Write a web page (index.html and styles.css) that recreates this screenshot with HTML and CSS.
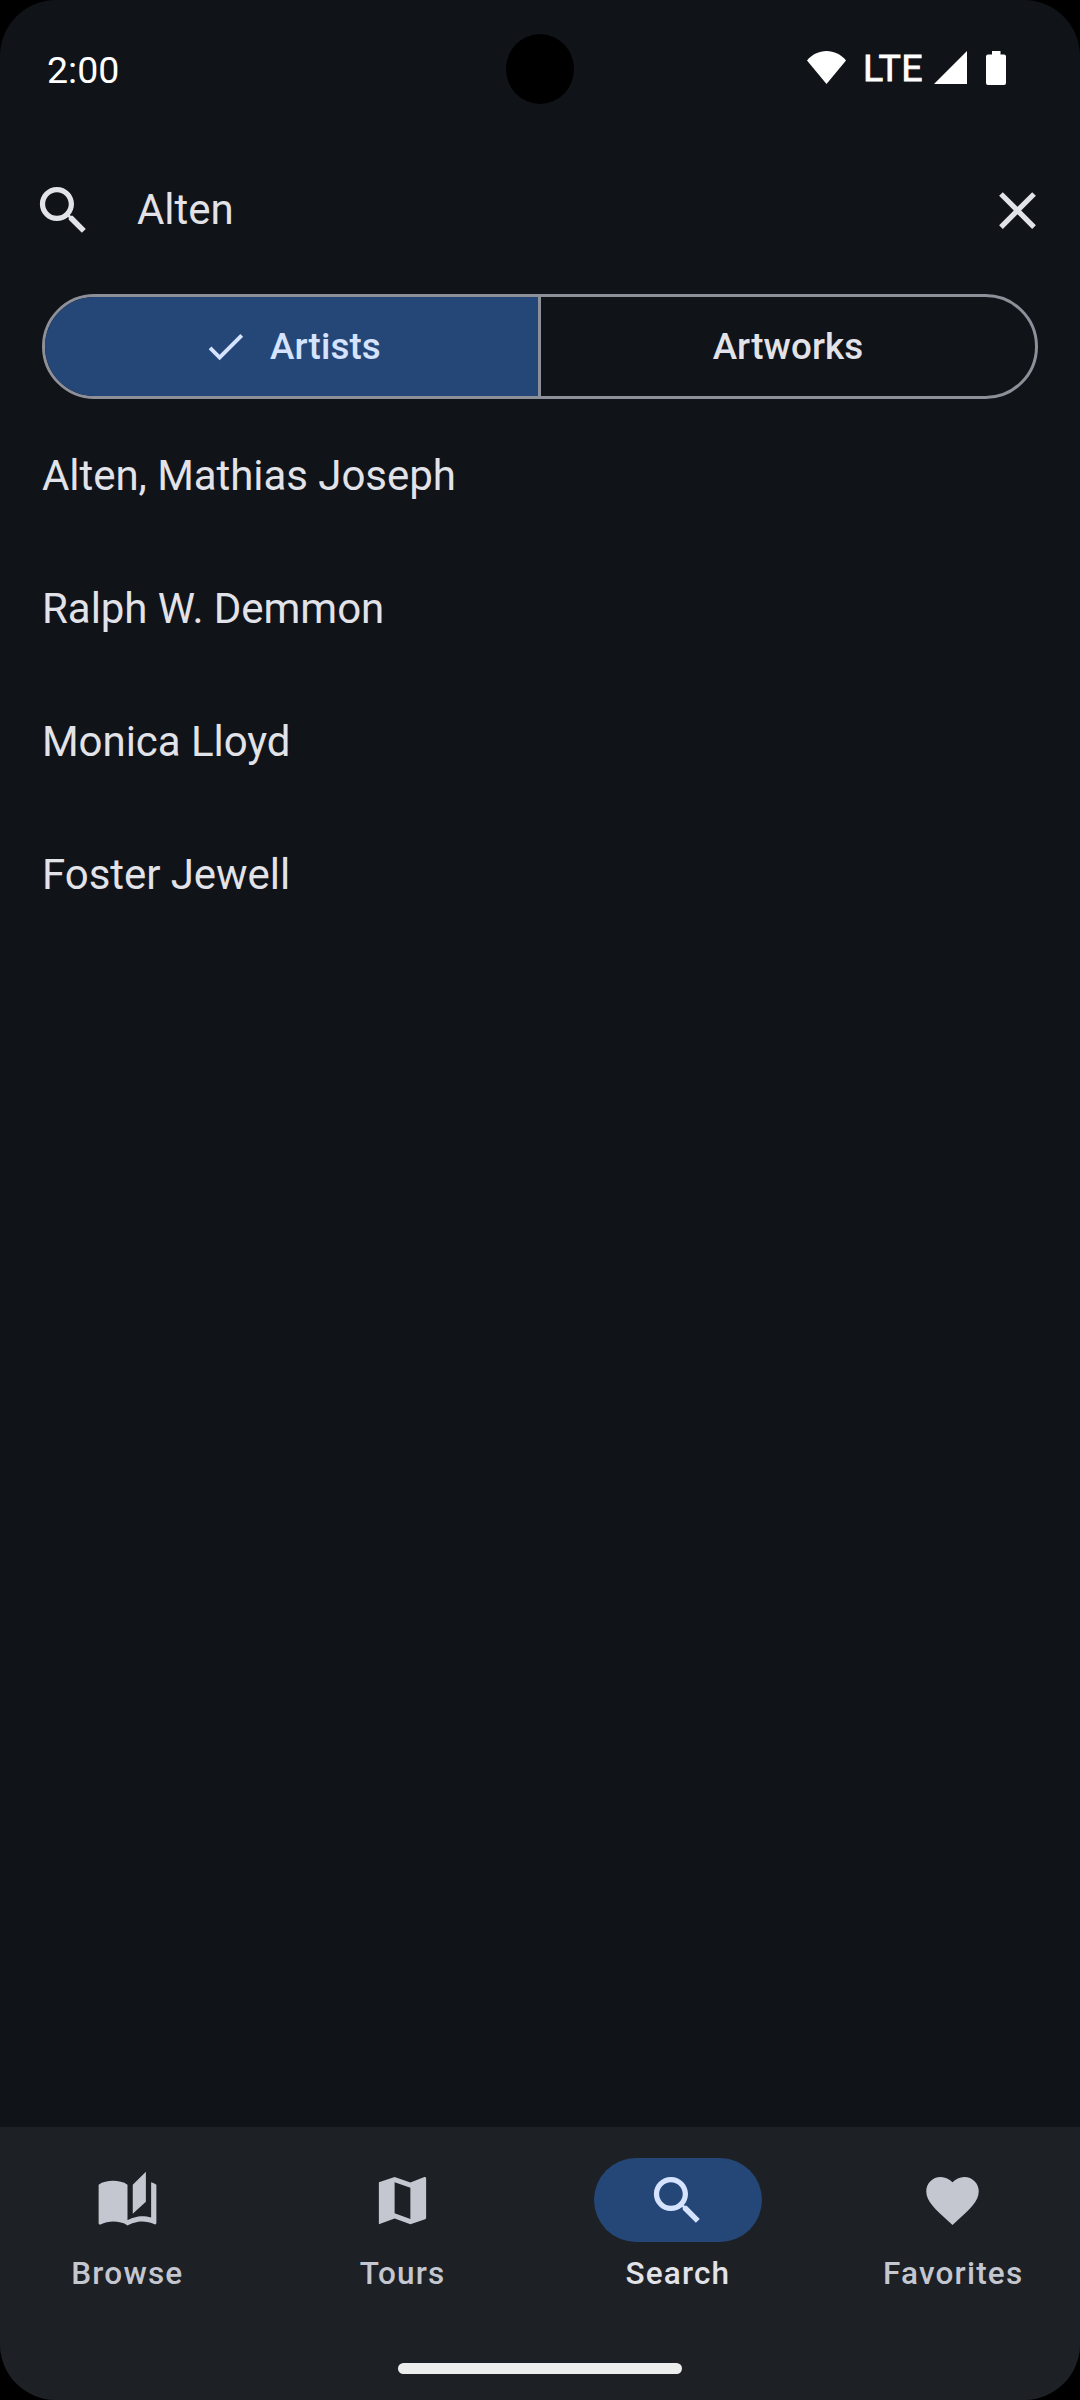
FILE: index.html
```html
<!DOCTYPE html>
<html lang="en">
<head>
<meta charset="utf-8">
<title>Search</title>
<link rel="stylesheet" href="styles.css">
</head>
<body>
<div class="screen">
  <header class="status-bar">
    <span class="clock">2:00</span>
    <div class="status-icons">
      <svg class="wifi" viewBox="0 0 39 33"><path d="M19.5 33 0 9.5C5 3.5 12 0 19.5 0S34 3.500 39 9.500Z"/></svg>
      <span class="network">LTE</span>
      <svg class="signal" viewBox="0 0 33 33"><path d="M33 0v33H0z"/></svg>
      <svg class="battery" viewBox="0 0 20 34"><path d="M6 0h8.500v3.500h3.500q2 0 2 2V32q0 2-2 2H2q-2 0-2-2V5.500q0-2 2-2h4z"/></svg>
    </div>
    <div class="camera"></div>
  </header>

  <div class="search-bar">
    <svg class="icon" viewBox="0 0 24 24"><path d="M15.500 14h-.79l-.28-.27C15.410 12.590 16 11.110 16 9.500 16 5.910 13.090 3 9.500 3S3 5.910 3 9.500 5.910 16 9.500 16c1.610 0 3.090-.59 4.230-1.570l.27.28v.79l5 4.990L20.490 19l-4.990-5zm-6 0C7.010 14 5 11.990 5 9.500S7.010 5 9.500 5 14 7.010 14 9.500 11.990 14 9.500 14z"/></svg>
    <span class="query">Alten</span>
    <svg class="icon" viewBox="0 0 24 24"><path d="M19 6.410 17.590 5 12 10.590 6.410 5 5 6.410 10.590 12 5 17.590 6.410 19 12 13.410 17.590 19 19 17.590 13.410 12z"/></svg>
  </div>

  <div class="segments">
    <div class="segment selected">
      <svg class="check" viewBox="0 0 24 24"><path d="M9 16.170 4.830 12l-1.420 1.410L9 19 21 7l-1.410-1.410z"/></svg>
      <span>Artists</span>
    </div>
    <div class="segment"><span>Artworks</span></div>
  </div>

  <main class="results">
    <div class="result">Alten, Mathias Joseph</div>
    <div class="result">Ralph W. Demmon</div>
    <div class="result">Monica Lloyd</div>
    <div class="result">Foster Jewell</div>
  </main>

  <footer class="bottom">
    <nav class="nav">
      <div class="nav-item">
        <div class="pill"><svg class="icon" viewBox="0 0 24 24"><path d="M19 1l-5 5v11l5-4.500V1zM1 6v14.650c0 .25.25.5.5.5.1 0 .15-.05.25-.05C3.100 20.450 5.050 20 6.500 20c1.950 0 4.050.4 5.500 1.500V6c-1.450-1.100-3.550-1.500-5.500-1.500S2.450 4.900 1 6zm22 13.500V6c-.6-.45-1.250-.75-2-1v13.500c-1.100-.35-2.300-.5-3.500-.5-1.700 0-4.150.65-5.500 1.500v2c1.350-.85 3.800-1.500 5.500-1.500 1.650 0 3.350.3 4.750 1.050.1.05.15.05.25.05.25 0 .5-.25.5-.5v-1.100z"/></svg></div>
        <span>Browse</span>
      </div>
      <div class="nav-item">
        <div class="pill"><svg class="icon" viewBox="0 0 24 24"><path d="M20.500 3l-.16.03L15 5.100 9 3 3 5.050V21l6-2.100 6 2.100 5.640-1.900c.21-.07.36-.25.36-.48V3.500c0-.28-.22-.5-.5-.5zM15 19l-6-2.110V5l6 2.110V19z"/></svg></div>
        <span>Tours</span>
      </div>
      <div class="nav-item active">
        <div class="pill"><svg class="icon" viewBox="0 0 24 24"><path d="M15.500 14h-.79l-.28-.27C15.410 12.590 16 11.110 16 9.500 16 5.910 13.090 3 9.500 3S3 5.910 3 9.500 5.910 16 9.500 16c1.610 0 3.090-.59 4.230-1.570l.27.28v.79l5 4.990L20.490 19l-4.990-5zm-6 0C7.010 14 5 11.990 5 9.500S7.010 5 9.500 5 14 7.010 14 9.500 11.990 14 9.500 14z"/></svg></div>
        <span>Search</span>
      </div>
      <div class="nav-item">
        <div class="pill"><svg class="icon" viewBox="0 0 24 24"><path d="M12 21.350l-1.450-1.320C5.400 15.360 2 12.280 2 8.500 2 5.420 4.420 3 7.500 3c1.740 0 3.410.81 4.500 2.090C13.090 3.810 14.760 3 16.500 3 19.580 3 22 5.420 22 8.500c0 3.780-3.400 6.860-8.550 11.540L12 21.350z"/></svg></div>
        <span>Favorites</span>
      </div>
    </nav>
    <div class="home-indicator"></div>
  </footer>
</div>
</body>
</html>
```
FILE: styles.css
```css
* { box-sizing: border-box; }

body {
  margin: 0;
  background: #000;
  font-family: Roboto, "Liberation Sans", sans-serif;
}

svg {
  display: block;
  flex: none;
  fill: currentColor;
}

.screen {
  width: 1080px;
  height: 2400px;
  display: flex;
  flex-direction: column;
  overflow: hidden;
  border-radius: 56px;
  background: #101318;
  color: #e2e2e9;
}

.status-bar {
  position: relative;
  height: 137px;
  display: flex;
  justify-content: space-between;
  padding: 51px 74px 0 47px;
  color: #fff;
}

.clock {
  font-size: 37.500px;
  line-height: 38px;
}

.status-icons {
  display: flex;
  align-items: flex-start;
}

.wifi { width: 39px; height: 33px; }

.network {
  width: 69px;
  margin-left: 17px;
  font-size: 37.500px;
  line-height: 35px;
  letter-spacing: 0.400px;
  -webkit-text-stroke: 0.8px currentColor;
}

.signal { width: 33px; height: 33px; margin-left: 2px; }
.battery { width: 20px; height: 34px; margin-left: 19px; }

.camera {
  position: absolute;
  left: 506px;
  top: 34px;
  width: 68px;
  height: 70px;
  border-radius: 50%;
  background: #000;
}

.search-bar {
  height: 147px;
  margin-bottom: 10px;
  padding: 0 31px 0 32px;
  display: flex;
  align-items: center;
}

.icon { width: 63px; height: 63px; }

.query {
  flex: 1;
  padding: 0 0 2px 42px;
  font-size: 42px;
  line-height: 63px;
  letter-spacing: -0.050px;
}

.segments {
  height: 105px;
  margin: 0 42px;
  display: grid;
  grid-template-columns: 496px 1fr;
  border: 3px solid #8e9099;
  border-radius: 53px;
  overflow: hidden;
}

.segment {
  display: flex;
  align-items: center;
  justify-content: center;
  gap: 21px;
  font-size: 36.750px;
  font-weight: 500;
  letter-spacing: 0.130px;
}

.segment.selected {
  background: #254777;
  color: #d6e3ff;
  border-right: 3px solid #8e9099;
}

.check { width: 47px; height: 47px; }

.results {
  flex: 1;
  padding: 10px 42px;
}

.result {
  height: 133px;
  padding-top: 35px;
  font-size: 42px;
  line-height: 63px;
  letter-spacing: -0.050px;
}

.bottom {
  height: 273px;
  background: #1d2024;
  color: #c4c6d0;
}

.nav {
  display: grid;
  grid-template-columns: repeat(4, 1fr);
  gap: 21px;
  height: 236px;
  padding-top: 31px;
}

.nav-item {
  display: flex;
  flex-direction: column;
  align-items: center;
  gap: 11px;
  font-size: 31.500px;
  line-height: 42px;
  font-weight: 500;
  letter-spacing: 1.200px;
}

.nav-item span { padding-left: 0.500px; }

.pill {
  width: 168px;
  height: 84px;
  display: flex;
  align-items: center;
  justify-content: center;
  border-radius: 42px;
}

.active { color: #e2e2e9; }

.active .pill {
  background: #254777;
  color: #d6e3ff;
}

.home-indicator {
  width: 284px;
  height: 11px;
  margin: 0 auto;
  border-radius: 6px;
  background: #eceeed;
}
```
